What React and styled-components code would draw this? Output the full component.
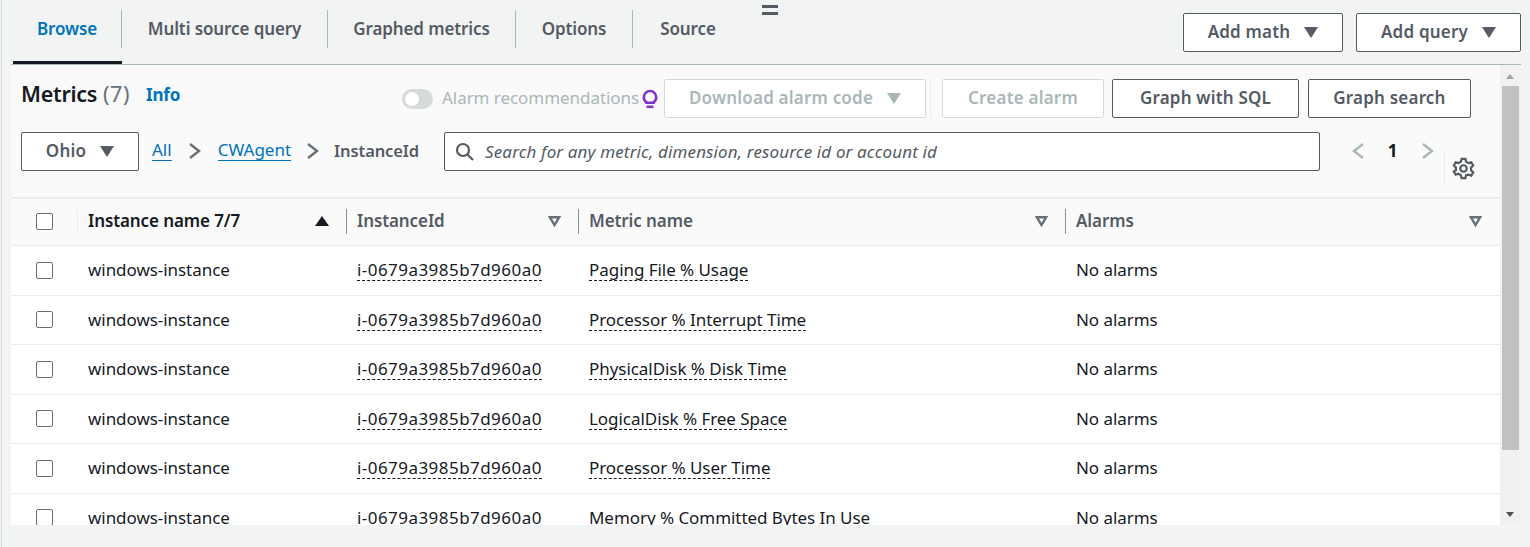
import React from "react";
import styled, { createGlobalStyle } from "styled-components";

const Global = createGlobalStyle`
  html, body { margin: 0; padding: 0; background: #f2f3f3; height: 547px; overflow: hidden; }
  body { font-family: "Noto Sans", "Open Sans", sans-serif; color: #16191f; }
  * { box-sizing: border-box; }
`;

const Page = styled.div`
  width: 1529px; height: 547px; position: relative; overflow: hidden;
  border-left: 1px solid #d5dbdb; margin: 0 0 0 1px; background: #f2f3f3;
  padding-left: 9px;
`;
const TabBar = styled.div`
  height: 65px; width: 1510px; display: flex; align-items: flex-start;
  border-bottom: 1px solid #aab7b8; padding-left: 2px; position: relative;
`;
const Tab = styled.div`
  width: ${p => p.$w}px; height: 64px; display: flex; align-items: flex-start; justify-content: center;
  padding-top: 10px;
  ${p => p.$active && "border-bottom: 3px solid #16191f;"}
`;
const TabLabel = styled.div`
  height: 38px; width: 100%; display: flex; align-items: center; justify-content: center;
  font-size: 17px; font-weight: 600; letter-spacing: -0.1px; padding-bottom: 2px;
  color: ${p => p.$active ? "#0073bb" : "#545b64"};
  border-right: ${p => p.$last ? "none" : "1px solid #aab7b8"};
`;
const Handle = styled.div`
  position: absolute; left: 751px; top: 5px; width: 16px; height: 10px;
  border-top: 3px solid #545b64; border-bottom: 3px solid #545b64;
`;
const TabActions = styled.div`
  margin-left: auto; margin-top: 13px; display: flex; gap: 13px;
`;
const Button = styled.div`
  height: ${p => p.$h || 39}px; width: ${p => p.$w}px; padding-bottom: 2px;
  display: flex; align-items: center; justify-content: center; gap: 14px; flex: none;
  margin-left: ${p => p.$ml || 0}px;
  background: #fff; border: 1px solid ${p => p.$off ? "#d5dbdb" : "#545b64"}; border-radius: 2px;
  color: ${p => p.$off ? "#aab7b8" : "#545b64"}; font-size: 17px; font-weight: 600; letter-spacing: 0.2px;
`;
const Caret = styled.svg`
  width: 14px; height: 11px; flex: none; fill: ${p => p.$c || "#545b64"}; margin-top: 2px;
`;
const Panel = styled.div`
  width: 1510px; height: 460px; display: flex; background: #fff; overflow: hidden;
`;
const Content = styled.div`
  width: 1489px; flex: none; overflow: hidden; height: 460px;
`;
const Head = styled.div`
  background: #fafafa; height: 134px; border-bottom: 2px solid #eaeded; padding: 14px 0 0 10px;
`;
const TitleRow = styled.div`
  height: 39px; display: flex; align-items: center;
`;
const Title = styled.div`
  font-size: 21.5px; font-weight: 600; color: #16191f; width: 125px; margin-top: -10px; letter-spacing: -0.3px;
`;
const Count = styled.span`
  color: #687078; font-weight: 400; margin-left: 6px; letter-spacing: 0.6px;
`;
const Info = styled.div`
  font-size: 17px; font-weight: 700; color: #0073bb; width: 256px; margin-top: -9px; letter-spacing: -0.2px;
`;
const Toggle = styled.div`
  width: 31px; height: 20px; border-radius: 10px; background: #d5dbdb; flex: none; margin-right: 9px;
  padding: 3px 0 0 3px;
`;
const Knob = styled.div`
  width: 14px; height: 14px; border-radius: 50%; background: #fff;
`;
const Muted = styled.div`
  font-size: 17px; color: #aab7b8; width: 199px; white-space: nowrap; letter-spacing: -0.05px; padding-bottom: 2px;
`;
const Bulb = styled.svg`
  width: 18px; height: 20px; flex: none; margin-right: 5px;
`;
const VSep = styled.div`
  width: 1px; height: 38px; background: #eaeded; margin: 0 11px 0 4px; flex: none;
`;
const FilterRow = styled.div`
  margin-top: 14px; height: 56px; display: flex; align-items: flex-start;
`;
const Crumbs = styled.div`
  display: flex; align-items: center; height: 39px; width: 305px; flex: none; padding: 0 0 2px 13px; font-size: 17px;
`;
const CrumbLink = styled.span`
  color: #0073bb; border-bottom: 1px solid #0073bb; line-height: 20px;
`;
const CrumbCurrent = styled.span`
  color: #545b64; font-weight: 600; font-size: 16.5px; letter-spacing: -0.1px;
`;
const Chevron = styled.svg`
  width: 14px; height: 20px; flex: none; margin: ${p => p.$m || "0 16px 0 16px"};
  fill: none; stroke: ${p => p.$c || "#687078"}; stroke-width: 2.4;
`;
const Search = styled.div`
  width: 876px; height: 39px; flex: none; background: #fff; border: 1px solid #545b64; border-radius: 2px;
  display: flex; align-items: center; padding-left: 10px; gap: 11px;
`;
const SearchIcon = styled.svg`
  width: 19px; height: 19px; flex: none; fill: none; stroke: #545b64; stroke-width: 2.2;
`;
const Placeholder = styled.span`
  font-size: 17px; font-style: italic; color: #545b64; letter-spacing: 0.14px;
`;
const Pager = styled.div`
  display: flex; align-items: center; height: 39px; margin-left: 31px; flex: none; width: 93px; padding-bottom: 2px;
`;
const PageNum = styled.span`
  font-size: 17px; font-weight: 700; color: #16191f; width: 27px; text-align: center; margin: 0 15px 0 14px;
`;
const Prefs = styled.div`
  width: 30px; height: 35px; margin-top: 18px; border-left: 1px solid #eaeded; flex: none;
  display: flex; align-items: center; padding-left: 7px;
`;
const Gear = styled.svg`
  width: 23px; height: 23px; flex: none; fill: none; stroke: #545b64; stroke-width: 2.3; margin-top: 1px;
`;
const Cols = "66px 269px 232px 487px 435px";
const HeaderRow = styled.div`
  display: grid; grid-template-columns: ${Cols}; height: 47px; padding-bottom: 2px; background: #fafafa; border-bottom: 1px solid #eaeded;
  align-items: center;
`;
const HeaderCell = styled.div`
  height: 25px; display: flex; align-items: center; justify-content: space-between;
  padding: 0 ${p => p.$pr || 17}px 0 10px;
  border-left: 1px solid ${p => p.$light ? "#eaeded" : "#879596"};
  font-size: 17px; font-weight: 600; letter-spacing: -0.1px;
  color: ${p => p.$dark ? "#16191f" : "#545b64"};
`;
const HeaderText = styled.span`
  margin-top: -2px;
`;
const CheckCell = styled.div`
  display: flex; justify-content: flex-start; padding-left: 25px;
`;
const Check = styled.div`
  width: 17px; height: 17px; border: 1px solid #687078; border-radius: 2px; background: #fff; flex: none;
`;
const Row = styled.div`
  display: grid; grid-template-columns: ${Cols}; height: 49.5px; align-items: center; border-bottom: 1px solid #eaeded;
  font-size: 17px; color: #16191f; background: #fff;
`;
const Cell = styled.div`
  padding-left: 11px; white-space: nowrap; letter-spacing: -0.05px; margin-bottom: 1px;
`;
const Dashed = styled.span`
  border-bottom: 1px dashed #16191f; line-height: 20px; display: inline-block;
  letter-spacing: ${p => p.$mono ? "0.45px" : "-0.05px"};
`;
const ScrollTrack = styled.div`
  width: 21px; flex: none; background: #f1f1f1; position: relative; display: flex; flex-direction: column; align-items: center;
`;
const Thumb = styled.div`
  width: 17px; height: 364px; background: #c1c1c1; margin-top: 21px;
`;
const ScrollArrow = styled.div`
  position: absolute; left: 6px; width: 0; height: 0; border-left: 4.5px solid transparent; border-right: 4.5px solid transparent;
  ${p => p.$up ? "top: 9px; border-bottom: 5px solid #a3a3a3;" : "bottom: 8px; border-top: 5px solid #505050;"}
`;

const CaretDown = ({ c }) => <Caret $c={c} viewBox="0 0 14 11"><path d="M0 0h14L7 11z" /></Caret>;
const FilterIcon = () => (
  <svg width="13" height="11" viewBox="0 0 13 11" fill="none" stroke="#687078" strokeWidth="2.4"><path d="M1.800 1.200h9.400L6.500 9z" /></svg>
);
const SortUp = () => (
  <svg width="14" height="10" viewBox="0 0 14 10" fill="#16191f"><path d="M0 10h14L7 0z" /></svg>
);

const tabs = [
  ["Browse", 109], ["Multi source query", 206], ["Graphed metrics", 188], ["Options", 117], ["Source", 110],
];
const metrics = [
  "Paging File % Usage", "Processor % Interrupt Time", "PhysicalDisk % Disk Time",
  "LogicalDisk % Free Space", "Processor % User Time", "Memory % Committed Bytes In Use",
];

export default function App() {
  return (
    <Page>
      <Global />
      <TabBar>
        {tabs.map(([t, w], i) => (
          <Tab key={t} $w={w} $active={i === 0}>
            <TabLabel $active={i === 0} $last={i === tabs.length - 1}>{t}</TabLabel>
          </Tab>
        ))}
        <Handle />
        <TabActions>
          <Button $w={160}>Add math <CaretDown /></Button>
          <Button $w={165}>Add query <CaretDown /></Button>
        </TabActions>
      </TabBar>
      <Panel>
        <Content>
          <Head>
            <TitleRow>
              <Title>Metrics<Count>(7)</Count></Title>
              <Info>Info</Info>
              <Toggle><Knob /></Toggle>
              <Muted>Alarm recommendations</Muted>
              <Bulb viewBox="0 0 18 20" fill="none" stroke="#8033c9" strokeWidth="2.6">
                <path d="M5.500 13.200C3.600 12 2.800 10.200 2.800 8.200a6.200 6.200 0 0 1 12.400 0c0 2-.8 3.800-2.700 5v.6h-7z" />
                <path d="M5.500 17.800h7" />
              </Bulb>
              <Button $w={262} $off>Download alarm code <CaretDown c="#aab7b8" /></Button>
              <VSep />
              <Button $w={162} $off>Create alarm</Button>
              <Button $w={187} $ml={8}>Graph with SQL</Button>
              <Button $w={163} $ml={9}>Graph search</Button>
            </TitleRow>
            <FilterRow>
              <Button $w={118}>Ohio <CaretDown /></Button>
              <Crumbs>
                <CrumbLink>All</CrumbLink>
                <Chevron viewBox="0 0 14 20"><path d="M2 3l9 7-9 7" /></Chevron>
                <CrumbLink>CWAgent</CrumbLink>
                <Chevron viewBox="0 0 14 20" $m="0 14px 0 15px"><path d="M2 3l9 7-9 7" /></Chevron>
                <CrumbCurrent>InstanceId</CrumbCurrent>
              </Crumbs>
              <Search>
                <SearchIcon viewBox="0 0 19 19"><circle cx="8" cy="8" r="6" /><path d="M12.500 12.500L18 18" /></SearchIcon>
                <Placeholder>Search for any metric, dimension, resource id or account id</Placeholder>
              </Search>
              <Pager>
                <Chevron viewBox="0 0 14 20" $c="#aab7b8" $m="0"><path d="M12 3l-9 7 9 7" /></Chevron>
                <PageNum>1</PageNum>
                <Chevron viewBox="0 0 14 20" $c="#aab7b8" $m="0"><path d="M2 3l9 7-9 7" /></Chevron>
              </Pager>
              <Prefs>
                <Gear viewBox="0 0 24 24">
                  <circle cx="12" cy="12" r="3.400" />
                  <path d="M10 2h4l.7 3 2.500 1.400 2.900-.9 2 3.400-2.200 2.100v2.900l2.200 2.100-2 3.400-2.900-.9L14.700 19l-.7 3h-4l-.7-3-2.500-1.500-2.900.9-2-3.400L4.100 13.900V11L1.900 8.900l2-3.400 2.900.9L9.300 5z" />
                </Gear>
              </Prefs>
            </FilterRow>
          </Head>
          <HeaderRow>
            <CheckCell><Check /></CheckCell>
            <HeaderCell $light $dark><HeaderText>Instance name 7/7</HeaderText><SortUp /></HeaderCell>
            <HeaderCell><HeaderText>InstanceId</HeaderText><FilterIcon /></HeaderCell>
            <HeaderCell><HeaderText>Metric name</HeaderText><FilterIcon /></HeaderCell>
            <HeaderCell $pr={18}><HeaderText>Alarms</HeaderText><FilterIcon /></HeaderCell>
          </HeaderRow>
          {metrics.map(m => (
            <Row key={m}>
              <CheckCell><Check /></CheckCell>
              <Cell>windows-instance</Cell>
              <Cell><Dashed $mono>i-0679a3985b7d960a0</Dashed></Cell>
              <Cell><Dashed>{m}</Dashed></Cell>
              <Cell>No alarms</Cell>
            </Row>
          ))}
        </Content>
        <ScrollTrack>
          <ScrollArrow $up />
          <Thumb />
          <ScrollArrow />
        </ScrollTrack>
      </Panel>
    </Page>
  );
}
